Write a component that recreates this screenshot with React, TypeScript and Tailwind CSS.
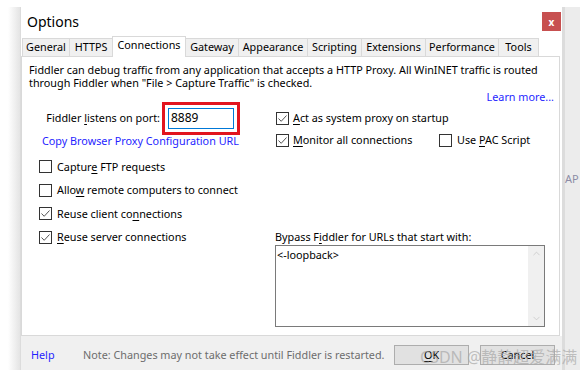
import { ChevronDown, ChevronUp } from 'lucide-react'
import type { ReactNode } from 'react'

const tabs = [
  { name: 'General', w: 48 },
  { name: 'HTTPS', w: 43 },
  { name: 'Connections', w: 74, active: true },
  { name: 'Gateway', w: 53 },
  { name: 'Appearance', w: 69 },
  { name: 'Scripting', w: 54 },
  { name: 'Extensions', w: 64 },
  { name: 'Performance', w: 73 },
  { name: 'Tools', w: 40 },
]

const CheckBox = ({ checked }: { checked?: boolean }) => (
  <span className="flex h-[13px] w-[13px] shrink-0 items-center justify-center border border-[#333333] bg-white">
    {checked && (
      <svg width="11" height="11" viewBox="0 0 11 11">
        <path d="M1.5 5.5 L4.2 8.3 L9.5 2.5" fill="none" stroke="#555555" strokeWidth="1" />
      </svg>
    )}
  </span>
)

const Key = ({ children }: { children: ReactNode }) => (
  <span className="underline underline-offset-2">{children}</span>
)

export default function App() {
  return (
    <div className="relative flex h-[377px] w-[580px] overflow-hidden bg-white font-['Noto_Sans',sans-serif] text-[10.8px] text-black">
      {/* window shadow */}
      <div className="ml-[8px] mt-[7px] h-[363px] w-[12px] bg-gradient-to-r from-white to-[#e4e4e4]" />

      {/* dialog */}
      <div className="mt-[7px] flex h-[363px] w-[542px] flex-col border-l border-[#dcdcdc] bg-white">
        <div className="flex h-[29px] items-center justify-between pl-[6px] pr-[1px]">
          <span className="text-[14px]">Options</span>
          <span className="flex h-[19px] w-[19px] items-center justify-center bg-[#c75050] text-[10px] font-bold leading-none text-white">
            x
          </span>
        </div>

        {/* tab strip */}
        <div className="flex h-[20px] items-end pl-[1px]">
          {tabs.map((t, i) =>
            t.active ? (
              <div
                key={t.name}
                style={{ width: t.w }}
                className="relative z-10 -mb-px -ml-px flex h-[21px] items-center justify-center border border-b-0 border-[#d9d9d9] bg-white pb-[3px]"
              >
                {t.name}
              </div>
            ) : (
              <div
                key={t.name}
                style={{ width: t.w }}
                className={
                  'flex h-[18px] items-center justify-center border-r border-t border-[#d9d9d9] bg-[#f0f0f0] ' +
                  (i === 0 ? 'border-l' : '')
                }
              >
                {t.name}
              </div>
            )
          )}
        </div>

        {/* tab page */}
        <div className="flex w-[539px] flex-1 flex-col border border-[#d9d9d9] bg-white">
          <p className="pl-[7px] pt-[6px] leading-[13px]">
            Fiddler can debug traffic from any application that accepts a HTTP Proxy. All WinINET traffic is routed
            <br />
            through Fiddler when "File &gt; Capture Traffic" is checked.
          </p>
          <div className="flex h-[16px] items-center justify-end pr-[5px] text-[#1f1fff]">Learn more...</div>

          <div className="flex">
            {/* left column */}
            <div className="flex w-[254px] flex-col">
              <div className="flex h-[26px] items-center">
                <span className="w-[138px] text-right">
                  Fiddler <Key>l</Key>istens on port:
                </span>
                <div className="ml-[2px] border-[3px] border-[#e2141e] p-[3px]">
                  <div className="flex h-[21px] w-[66px] items-center border border-[#0078d7] pl-[2px] text-[12px]">
                    8889
                  </div>
                </div>
              </div>
              <div className="flex h-[20px] items-center pl-[20px] text-[#1f1fff]">Copy Browser Proxy Configuration URL</div>
              <div className="mt-[4px] flex flex-col">
                <div className="flex h-[23.5px] items-center gap-[5px] pl-[17px]">
                  <CheckBox />
                  <span>
                    Captur<Key>e</Key> FTP requests
                  </span>
                </div>
                <div className="flex h-[23.5px] items-center gap-[5px] pl-[17px]">
                  <CheckBox />
                  <span>
                    Allo<Key>w</Key> remote computers to connect
                  </span>
                </div>
                <div className="flex h-[23.5px] items-center gap-[5px] pl-[17px]">
                  <CheckBox checked />
                  <span>
                    Reuse client co<Key>n</Key>nections
                  </span>
                </div>
                <div className="flex h-[23.5px] items-center gap-[5px] pl-[17px]">
                  <CheckBox checked />
                  <span>
                    <Key>R</Key>euse server connections
                  </span>
                </div>
              </div>
            </div>

            {/* right column */}
            <div className="flex flex-col">
              <div className="flex h-[26px] items-center gap-[4px]">
                <CheckBox checked />
                <span>
                  <Key>A</Key>ct as system proxy on startup
                </span>
              </div>
              <div className="flex h-[18px] items-center">
                <div className="flex w-[163px] items-center gap-[4px]">
                  <CheckBox checked />
                  <span>
                    <Key>M</Key>onitor all connections
                  </span>
                </div>
                <div className="flex items-center gap-[5px]">
                  <CheckBox />
                  <span>
                    Use <Key>P</Key>AC Script
                  </span>
                </div>
              </div>
              <div className="-ml-px mt-[80px] flex h-[16px] items-center">
                Bypass F<Key>i</Key>ddler for URLs that start with:
              </div>
              <div className="-ml-px flex h-[82px] w-[270px] border border-[#7a7a7a]">
                <div className="flex-1 pl-[1px] pt-[2px] leading-[14px]">&lt;-loopback&gt;</div>
                <div className="flex w-[16px] flex-col items-center justify-between bg-[#f0f0f0] py-[2px] text-[#c2c2c2]">
                  <ChevronUp size={11} strokeWidth={1.5} />
                  <ChevronDown size={11} strokeWidth={1.5} />
                </div>
              </div>
            </div>
          </div>
        </div>

        {/* footer */}
        <div className="flex h-[34px] items-center bg-[#f0f0f0] pt-[4px]">
          <span className="w-[62px] pl-[10px] text-[#1f1fff]">Help</span>
          <span className="w-[311px] text-[#6d6d6d]">Note: Changes may not take effect until Fiddler is restarted.</span>
          <div className="flex gap-[11px]">
            <div className="flex h-[20px] w-[75px] items-center justify-center border border-[#adadad] bg-[#e1e1e1]">
              <Key>O</Key>K
            </div>
            <div className="flex h-[20px] w-[75px] items-center justify-center border border-[#adadad] bg-[#e1e1e1]">
              Cancel
            </div>
          </div>
        </div>
      </div>

      {/* window behind */}
      <div className="mt-[7px] flex h-[363px] w-[18px] overflow-hidden">
        <div className="w-[3px] bg-[#dcdcdc]" />
        <div className="flex-1 bg-[#ececec] pt-[164px] text-[11px] text-[#8c8ca6]">AP</div>
      </div>

      {/* watermark */}
      <span className="absolute left-[420px] top-[345px] font-['Noto_Sans','Noto_Sans_CJK_SC',sans-serif] text-[16px] text-[#a8a8a8]/70">
        CSDN @静静超爱满满
      </span>
    </div>
  )
}
